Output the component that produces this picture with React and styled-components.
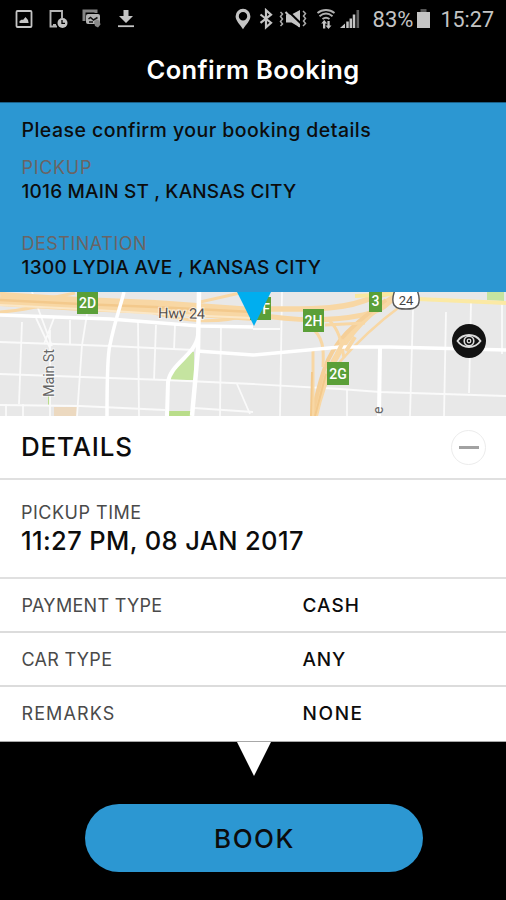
import React from "react";
import styled, { createGlobalStyle } from "styled-components";

const blue = "#2c97d2";

const GlobalStyle = createGlobalStyle`
    * { box-sizing: border-box; }
    body {
        margin: 0;
        background: #000;
        font-family: Inter, "Open Sans", sans-serif;
    }
`;

//Styled Components

const Screen = styled.div`
    width: 506px;
    height: 900px;
    display: flex;
    flex-direction: column;
    overflow: hidden;
    background: #000;
`;

const StatusBar = styled.div`
    height: 37px;
    flex: none;
    display: flex;
    justify-content: space-between;
    align-items: center;
    padding: 0 12px 0 15px;
    color: #c4c4c4;
    font-family: Roboto, sans-serif;
`;

const StatusLeft = styled.div`
    display: flex;
    align-items: center;
    gap: 14.5px;
`;

const StatusRight = styled.div`
    display: flex;
    align-items: center;
`;

const StatusIcon = styled.svg`
    display: block;
    flex: none;
    margin-right: ${(p) => p.$gap || 0}px;
`;

const StatusText = styled.span`
    font-size: ${(p) => p.$size}px;
    line-height: 24px;
    padding-top: 2px;
    margin-right: ${(p) => p.$gap || 0}px;
`;

const TitleBar = styled.header`
    height: 65px;
    flex: none;
    display: flex;
    align-items: center;
    justify-content: center;
`;

const Text = styled.div`
    font-size: ${(p) => p.$size || 18}px;
    font-weight: ${(p) => p.$weight || 500};
    letter-spacing: ${(p) => p.$track || 0}px;
    color: ${(p) => p.$color || "#0c0c0c"};
    line-height: 24px;
    white-space: nowrap;
`;

const Summary = styled.section`
    height: 190px;
    flex: none;
    padding: 15px 21px 0 21.5px;
    border-top: 1px solid #1b5f86;
    background: ${blue};
`;

const Place = styled.div`
    padding-top: ${(p) => p.$top}px;
`;

const MapArea = styled.section`
    position: relative;
    height: 124px;
    flex: none;
    background: #e8e8e8;
`;

const MapSvg = styled.svg`
    display: block;
`;

const EyeButton = styled.button`
    position: absolute;
    left: 452px;
    top: 32px;
    width: 34px;
    height: 34px;
    padding: 0;
    border: 0;
    border-radius: 50%;
    background: #121212;
    display: flex;
    align-items: center;
    justify-content: center;
`;

const Details = styled.section`
    height: 326px;
    flex: none;
    background: #fff;
    border-bottom: 1px solid #a8a8a8;
`;

const DetailsHead = styled.div`
    height: 64px;
    display: flex;
    align-items: center;
    justify-content: space-between;
    padding: 0 20px 0 21px;
    border-bottom: 2px solid #e0e0e0;
`;

const Collapse = styled.button`
    width: 35px;
    height: 35px;
    padding: 0;
    border: 1px solid #ececec;
    border-radius: 50%;
    background: #fff;
    display: flex;
    align-items: center;
    justify-content: center;
`;

const Minus = styled.span`
    width: 20px;
    height: 3px;
    background: #a2a2a2;
`;

const TimeBlock = styled.div`
    height: 99px;
    padding: 21px 21px 0;
    border-bottom: 2px solid #e0e0e0;
`;

const TimeValue = styled.div`
    padding-top: 4px;
`;

const Row = styled.div`
    height: 54px;
    display: grid;
    grid-template-columns: 281px 1fr;
    align-items: center;
    padding: ${(p) => (p.$last ? 0 : 2)}px 0 0 21.5px;
    border-bottom: ${(p) => (p.$last ? 0 : 2)}px solid #dcdcdc;
`;

const Footer = styled.footer`
    flex: 1;
    display: flex;
    flex-direction: column;
    align-items: center;
    padding-left: 1px;
`;

const BookButton = styled.button`
    width: 338px;
    height: 68px;
    margin-top: 28px;
    padding: 2px 0 0 2px;
    border: 0;
    border-radius: 34px;
    background: ${blue};
    font-family: inherit;
`;

const details = [
    { label: "PAYMENT TYPE", value: "CASH", size: 19, track: [0.3, 1] },
    { label: "CAR TYPE", value: "ANY", size: 19, track: [0.3, 0.8] },
    { label: "REMARKS", value: "NONE", size: 19, track: [1.1, 1.6] },
];

const exits = [
    { label: "2D", x: 77, y: 291, w: 21 },
    { label: "F", x: 250, y: 297, w: 21, labelX: 266 },
    { label: "2H", x: 303, y: 309, w: 21 },
    { label: "3", x: 369, y: 289, w: 13 },
    { label: "2G", x: 327, y: 362, w: 22 },
];

function LeftIcons() {
    return (
        <StatusLeft>
            <StatusIcon width="18" height="20" viewBox="0 0 18 20">
                <rect x="1.5" y="2" width="15" height="16" rx="1" fill="none" stroke="#c4c4c4" strokeWidth="1.8" />
                <path d="M4.5 14v-2l2.5-1.5 1 .5 2.5-3 2.5 3 .6 3z" fill="#c4c4c4" />
            </StatusIcon>
            <StatusIcon width="20" height="20" viewBox="0 0 20 20">
                <path d="M14 9V2H2.5v15.5H9" fill="none" stroke="#b4b4b4" strokeWidth="1.9" />
                <path d="M5 15h3v3H5z" fill="#b4b4b4" />
                <circle cx="14.5" cy="14" r="5" fill="#c4c4c4" />
                <path d="M14 11v3.3h3" fill="none" stroke="#000" strokeWidth="1.3" />
            </StatusIcon>
            <StatusIcon width="20" height="20" viewBox="0 0 20 20">
                <path d="M2 12V2h12v2" fill="none" stroke="#848484" strokeWidth="3" />
                <rect x="4" y="5" width="14" height="10" rx="2" fill="#b4b4b4" />
                <path d="M6.5 10l2-1.5 3 2.5 4-2.5M7 13h4" fill="none" stroke="#111" strokeWidth="1.5" />
                <path d="M12 13l2-2.5 3.5 1 1 4-2.5 3-3-1.5z" fill="#888" />
            </StatusIcon>
            <StatusIcon width="18" height="20" viewBox="0 0 18 20">
                <path d="M6.5 1h5v6h4.5L9 14 2 7h4.5z" fill="#c4c4c4" />
                <path d="M1 17.2h16" stroke="#c4c4c4" strokeWidth="1.8" />
            </StatusIcon>
        </StatusLeft>
    );
}

function RightIcons() {
    return (
        <StatusRight>
            <StatusIcon width="16" height="22" viewBox="0 0 16 22" $gap={8}>
                <path fillRule="evenodd" d="M8 .8a7.4 7.4 0 0 0-7.4 7.4c0 4.500 4.400 8.300 7.400 13 3-4.700 7.400-8.500 7.400-13A7.400 7.400 0 0 0 8 .8zm0 3.200a4.200 4.200 0 1 1 0 8.400 4.200 4.200 0 0 1 0-8.400z" fill="#c4c4c4" />
            </StatusIcon>
            <StatusIcon width="14" height="22" viewBox="0 0 14 22" $gap={6}>
                <path d="M1.5 6.5l10.500 8.200-5 4.500V2.200l5 4.500-10.500 8.200" fill="none" stroke="#c4c4c4" strokeWidth="2.2" />
            </StatusIcon>
            <StatusIcon width="28" height="22" viewBox="0 0 28 22" $gap={9}>
                <path d="M1.5 4l2 2-2 2.500 2 2.500-2 2.500 2 2.500-2 2" fill="none" stroke="#aaa" strokeWidth="1.5" />
                <path d="M24 3l2.500 2.500-2 2.500 2 2.500-2 2.500 2 2.500L24 18" fill="none" stroke="#aaa" strokeWidth="1.5" />
                <path d="M7 6.5h5.500L21 2v17.500L12.500 14.500H7z" fill="#c4c4c4" />
                <path d="M9 3l13.500 13" stroke="#000" strokeWidth="2" />
                <path d="M6.5 4l14 14.500" stroke="#c4c4c4" strokeWidth="2" />
            </StatusIcon>
            <StatusIcon width="20" height="22" viewBox="0 0 20 22" $gap={4}>
                <path d="M1.5 5c5-4 12-4 17 0M3.500 8.200c4-3.300 9-3.300 13 0M6.500 11c2-1.500 5-1.500 7 0" fill="none" stroke="#b0b0b0" strokeWidth="1.9" />
                <path d="M8.200 12l3 3.500H9.300v5H7v-5H5.200zM12.500 21l-3-3.500h1.900V13h2.300v4.500h1.800z" fill="#c4c4c4" />
            </StatusIcon>
            <StatusIcon width="20" height="22" viewBox="0 0 20 22" $gap={13}>
                <path d="M0 20l5-4.500V20z" fill="#c4c4c4" />
                <path d="M7.500 20v-6.500M10.800 20v-9.500M14 20V6.500" stroke="#c4c4c4" strokeWidth="2.5" />
                <path d="M17.800 20V2" stroke="#606060" strokeWidth="2.6" />
            </StatusIcon>
            <StatusText $size={22} $gap={3}>83%</StatusText>
            <StatusIcon width="15" height="22" viewBox="0 0 15 22" $gap={9}>
                <path d="M4.5 1h6v3h-6z" fill="#555" />
                <path d="M1 4h13v16H1z" fill="#c4c4c4" />
            </StatusIcon>
            <StatusText $size={21.5}>15:27</StatusText>
        </StatusRight>
    );
}

function CityMap() {
    return (
        <MapSvg width="506" height="124" viewBox="0 292 506 124">
            {/* blocks of park and plaza */}
            <path d="M190 352h4v28h-24c2-10 10-21 20-28z" fill="#c5e4a0" />
            <path d="M167 411h25v5h-25zM48 396h2v9h-2z" fill="#b9dd8a" />
            <path d="M487 292h17v9l-17-1z" fill="#c5e4a0" />
            <path d="M54 407h23v9H54z" fill="#ecd9c0" />

            {/* side streets */}
            <g fill="none" stroke="#fafafa" strokeWidth="1.8">
                <path d="M0 342l110 4 84 4M0 374l165 6 88 4 87 5 40 3 126 4M0 405l80 1 85 4M194 408l59 4" />
                <path d="M22 322l-3 82M70 320v24M87 314l-5 31-5 71M138 322l1 94M156 325l-2 55M175 325l-1 25M221 326l-1 90M237 384l13 30" />
                <path d="M32 292l20 54M36 318l14 30M54 318l-10 26M50 330v86M23 404v12M6 404v12" />
                <path d="M282 292l-2 124M413 310l-3 106M446 312l-2 104M471 303l-2 90M502 304v50M347 390v26M253 329h27" />
            </g>

            {/* motorway */}
            <g fill="none" stroke="#f8d7a4">
                <path d="M0 299l80 5 75 3 98 7" strokeWidth="14" />
                <path d="M0 293l35 8 40-8M150 312c30 8 60 14 105 2M0 312c30-2 40-8 70-9M200 302l40-9" strokeWidth="3" />
                <path d="M0 300l80 4 75 3 98 5" stroke="#f3c98c" strokeWidth="2.5" />
                <path d="M0 305l80 4 80 5 93 4" stroke="#fbe7c6" strokeWidth="2" />
                <path d="M265 309c40 0 80 2 108-12l18-5" strokeWidth="5.5" />
                <path d="M253 314c40 7 80 7 110 1 18-4 25-10 36-23" strokeWidth="5" />
                <path d="M396 296c-28 16-48 38-62 65-9 18-15 37-19 55" strokeWidth="6" />
                <path d="M402 305c-30 22-52 45-65 60" strokeWidth="2.5" />
                <path d="M386 300c-32 24-52 40-62 70-6 18-9 32-12 46" stroke="#f5cf98" strokeWidth="4" />
                <path d="M309 325c15 12 15 24 14 42M329 320c10 10 12 20 15 38M313 351v65M325 325l40-2" strokeWidth="3" />
                <path d="M312 372l-1 44M326 374l-11 42" stroke="#f3c98c" strokeWidth="2" />
            </g>
            <path d="M355 296l40-2" stroke="#f8e8a0" strokeWidth="4" />
            <path d="M418 299l88 4" stroke="#fbe9a4" strokeWidth="4" />

            {/* main streets */}
            <g fill="none" stroke="#fff">
                <path d="M0 315l110 4 90 7 53 1" strokeWidth="3.5" />
                <path d="M124 292c-4 16-10 32-14 53-3 10-3 40-3 71" strokeWidth="3.5" />
                <path d="M199 292l-1 58-6 66" strokeWidth="4.5" />
                <path d="M198 335c-2 20-27 28-30 47l-1 34" strokeWidth="4" />
                <path d="M197 351l56 4 87-8h50l116 3" strokeWidth="3.5" />
                <path d="M380 348l-1 68" strokeWidth="4" />
            </g>
            <path d="M344 340l-7 14M355 337l-9 14" stroke="#f8d7a4" strokeWidth="4" />

            {exits.map((e) => (
                <g key={e.label}>
                    <rect x={e.x} y={e.y} width={e.w} height="23" fill="#5a9f38" />
                    <text x={e.labelX || e.x + e.w / 2} y={e.y + 16.5} textAnchor="middle" fontFamily="Roboto" fontWeight="500" fontSize="14" fill="#fff">
                        {e.label}
                    </text>
                </g>
            ))}
            <path d="M395 290h22c2 5 3 11 1 15-3 4-7 4-12 4s-9 0-12-4c-2-4-1-10 1-15z" fill="#fff" stroke="#555" strokeWidth="1.4" />
            <text x="406" y="304.5" textAnchor="middle" fontFamily="Roboto" fontSize="13" fill="#444">24</text>
            <text x="158" y="318" transform="rotate(1 158 318)" fontFamily="Roboto" fontSize="14.5" fill="#57504c" stroke="#fff" strokeWidth="2" strokeOpacity=".6" paintOrder="stroke" textLength="47">Hwy 24</text>
            <text x="54" y="397" transform="rotate(-90 54 397)" fontFamily="Roboto" fontSize="14.5" fill="#666" stroke="#fff" strokeWidth="2" strokeOpacity=".6" paintOrder="stroke" textLength="48">Main St</text>
            <text x="383" y="414" transform="rotate(-90 383 414)" fontFamily="Roboto" fontSize="14" fill="#666">e</text>
            <path d="M237 292h34l-17 34z" fill="#00aeef" />
        </MapSvg>
    );
}

export default function App() {
    return (
        <Screen>
            <GlobalStyle />
            <StatusBar>
                <LeftIcons />
                <RightIcons />
            </StatusBar>
            <TitleBar>
                <Text as="h1" $size={25.5} $weight={600} $track={0.4} $color="#fff">Confirm Booking</Text>
            </TitleBar>
            <Summary>
                <Text $size={19.5} $track={0.45}>Please confirm your booking details</Text>
                <Place $top={14}>
                    <Text $weight={400} $track={0.7} $color="#6b6464">PICKUP</Text>
                    <Text $size={19} $track={0.2}>1016 MAIN ST , KANSAS CITY</Text>
                </Place>
                <Place $top={28}>
                    <Text $weight={400} $track={0.5} $color="#6b6464">DESTINATION</Text>
                    <Text $size={19} $track={0.3}>1300 LYDIA AVE , KANSAS CITY</Text>
                </Place>
            </Summary>
            <MapArea>
                <CityMap />
                <EyeButton aria-label="Show map">
                    <svg width="26" height="18" viewBox="0 0 26 18" fill="none" stroke="#ddd">
                        <path d="M1.5 9C7 1 19 1 24.500 9 19 17 7 17 1.500 9z" strokeWidth="1.8" />
                        <circle cx="13" cy="9" r="4.8" strokeWidth="1.6" />
                        <circle cx="13" cy="9" r="1.8" strokeWidth="1.3" />
                    </svg>
                </EyeButton>
            </MapArea>
            <Details>
                <DetailsHead>
                    <Text as="h2" $size={26} $track={0.8}>DETAILS</Text>
                    <Collapse aria-label="Collapse details">
                        <Minus />
                    </Collapse>
                </DetailsHead>
                <TimeBlock>
                    <Text $weight={400} $track={0.5} $color="#4a4a4a">PICKUP TIME</Text>
                    <TimeValue>
                        <Text $size={25.5} $track={0.38}>11:27 PM, 08 JAN 2017</Text>
                    </TimeValue>
                </TimeBlock>
                {details.map((d, i) => (
                    <Row key={d.label} $last={i === details.length - 1}>
                        <Text $weight={400} $track={d.track[0]} $color="#4a4a4a">{d.label}</Text>
                        <Text $size={d.size} $track={d.track[1]}>{d.value}</Text>
                    </Row>
                ))}
            </Details>
            <Footer>
                <svg width="34" height="34" viewBox="0 0 34 34">
                    <path d="M0 0h34L17 34z" fill="#fff" />
                </svg>
                <BookButton>
                    <Text as="span" $size={26} $track={1.5}>BOOK</Text>
                </BookButton>
            </Footer>
        </Screen>
    );
}
